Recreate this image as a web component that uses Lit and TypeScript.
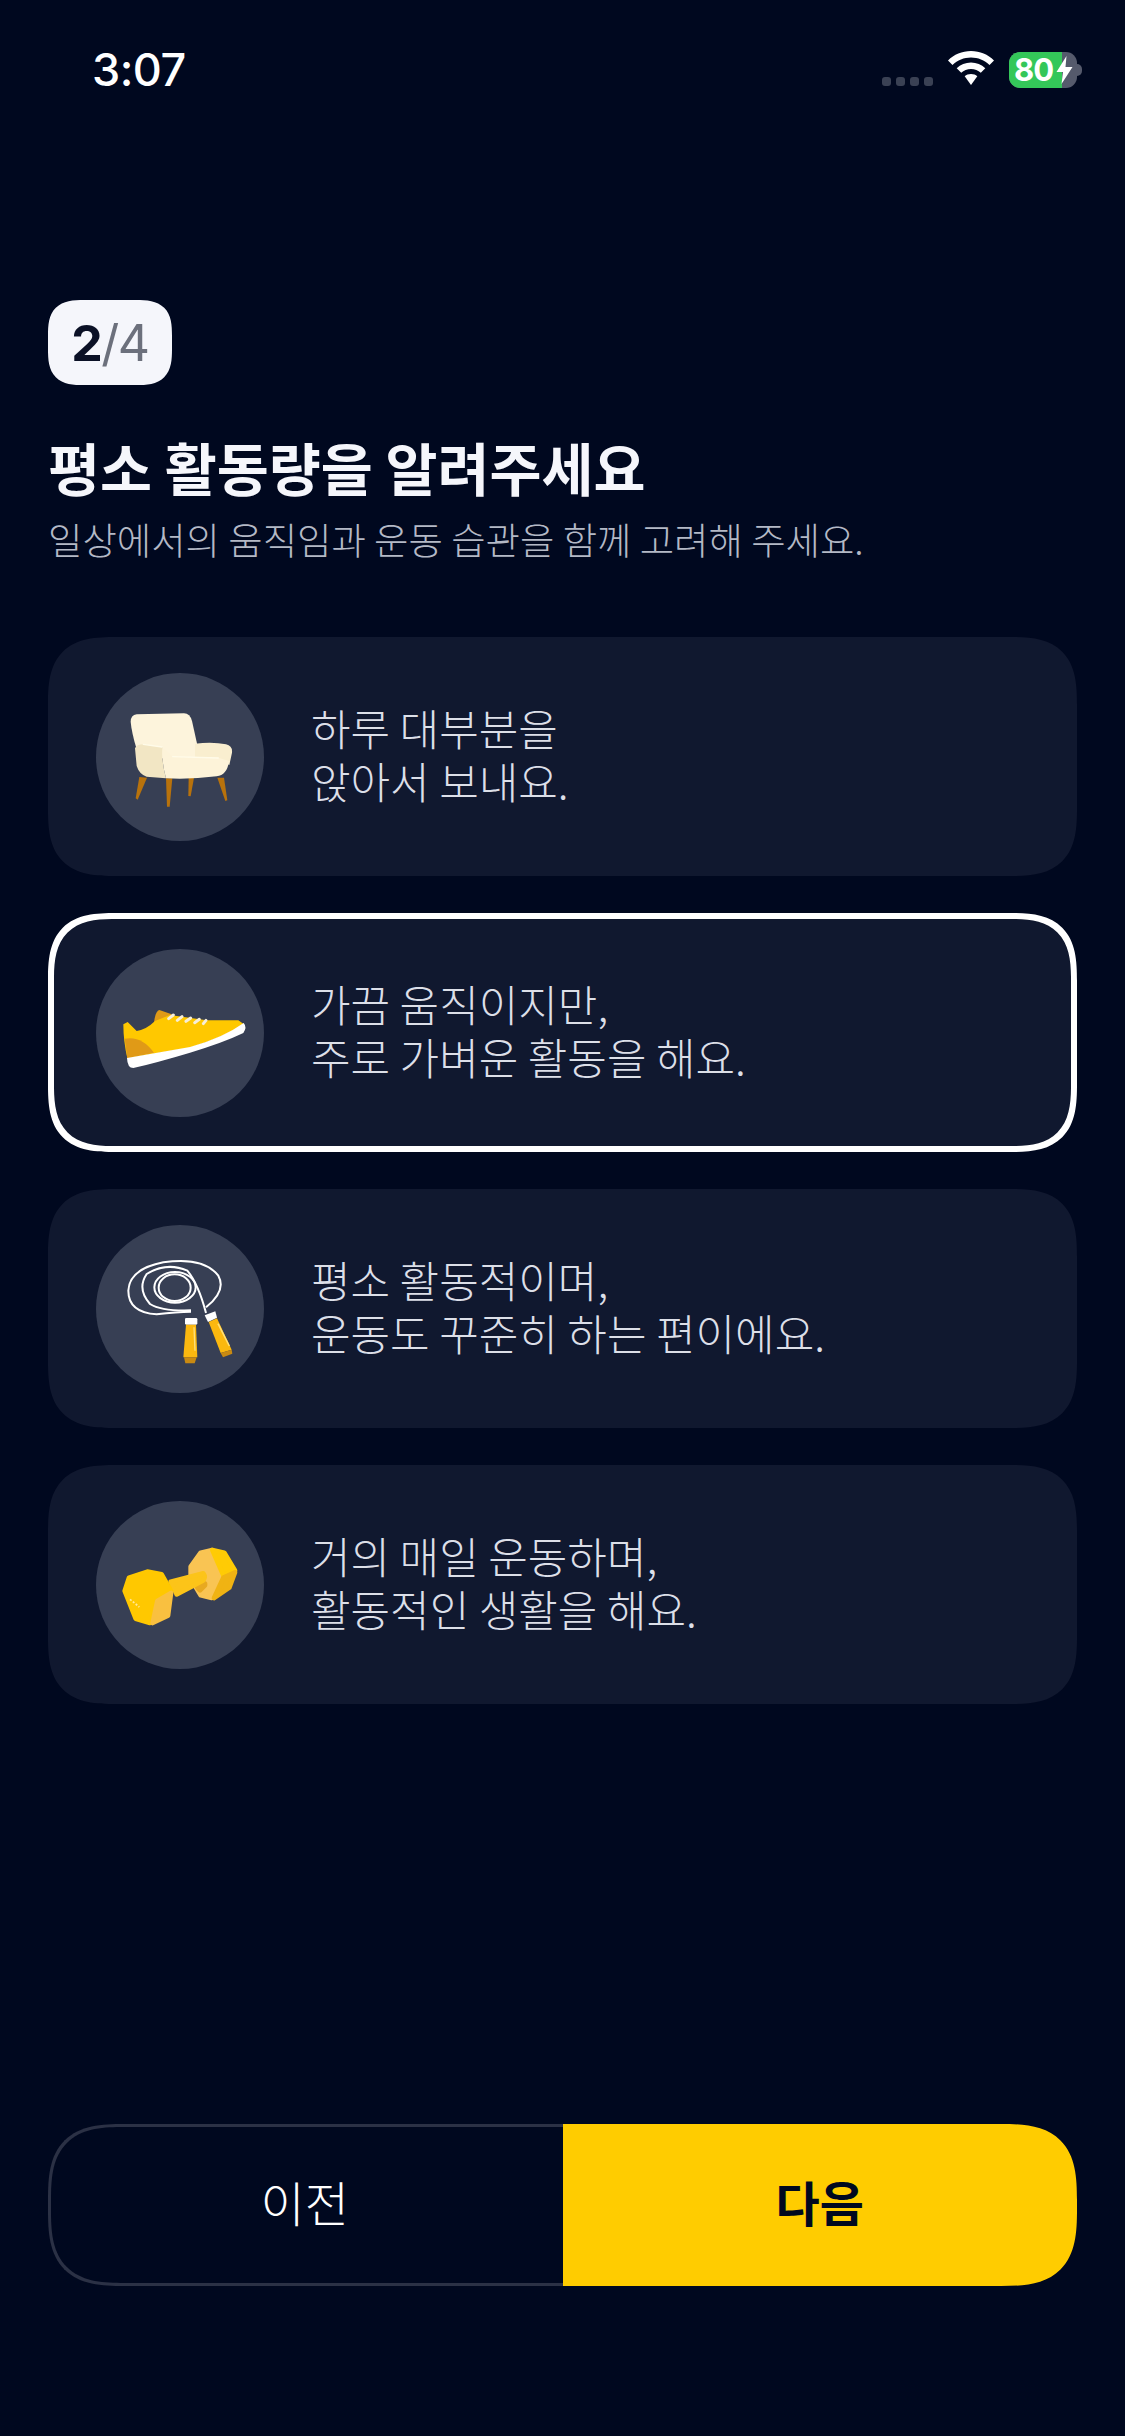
import { LitElement, html, css, svg } from 'lit';
import { customElement, state } from 'lit/decorators.js';

// Icons are drawn in the coordinates of a 190px crop at 3x, viewBox picks out the circle
const chairIcon = svg`
  <g fill="#b8720c">
    <path d="M148 348 L171 350 L143 416 L137 412z" />
    <path d="M228 352 L247 352 L239 437 L231 437z" />
    <path d="M296 350 L312 350 L302 406 L295 405z" />
    <path d="M382 350 L402 350 L412 418 L406 420z" />
  </g>
  <path fill="#fdf4dc" d="M122 182 Q122 163 140 160 L282 157 Q300 158 306 180 L322 252 L322 295 L225 295 L140 265 Q125 215 122 182z" />
  <path fill="#f9eecf" d="M315 248 Q370 242 408 250 Q428 254 426 275 L418 312 L385 295 L315 288z" />
  <path fill="#f2e6c4" d="M135 262 Q140 250 160 250 L218 258 Q214 300 228 352 L170 347 Q148 340 140 315z" />
  <path fill="#fdf3d9" d="M218 262 Q238 275 245 285 L385 290 L417 300 Q412 342 380 346 Q300 356 228 352 Q214 300 218 262z" />
  <g fill="none" stroke="#fffbe9" stroke-width="4" stroke-linecap="round">
    <path d="M160 250 L216 258" /><path d="M248 287 L385 291" />
  </g>
`;

const shoeIcon = svg`
  <path fill="#e09a17" d="M192 245 Q196 210 208 207 L245 220 L232 240z" />
  <path fill="#ffc800" d="M100 250 L113 243 L140 270 Q170 265 195 240 L240 222 L350 238 L445 238 L462 250 Q400 290 300 320 L112 352 Q100 300 100 250z" />
  <path fill="#e09a17" d="M104 293 Q155 283 192 335 L112 352z" />
  <path fill="#fff" d="M111 351 L300 318 Q400 290 461 246 Q472 258 460 276 Q400 305 300 335 Q200 365 130 381 Q112 381 111 351z" />
  <g stroke="#f6eeda" stroke-width="9" stroke-linecap="round">
    <path d="M236 233 L250 222" /><path d="M262 238 L276 227" /><path d="M288 241 L302 231" />
    <path d="M314 245 L328 235" /><path d="M340 248 L348 238" />
  </g>
`;

const ropeIcon = svg`
  <g fill="none" stroke="#fff" stroke-width="6">
    <path d="M303 288 Q260 288 200 296 Q115 290 115 225 Q118 160 220 140 Q340 122 385 180 Q410 225 348 275" />
    <path d="M348 292 Q325 205 292 165 Q230 138 170 175 Q140 220 180 265 Q215 287 303 284" />
    <ellipse cx="255" cy="215" rx="62" ry="46" />
    <ellipse cx="254" cy="216" rx="48" ry="40" />
  </g>
  <rect x="285" y="307" width="37" height="20" rx="4" fill="#fff" />
  <path fill="#fbb80f" d="M288 327 L318 327 L322 425 L280 425z" />
  <path fill="#ffe07a" d="M310 335 L314 335 L317 405 L313 405z" />
  <path fill="#c98a12" d="M282 425 L320 425 L314 443 L286 443z" />
  <path fill="#fff" d="M344 299 L376 287 L381 306 L354 319z" />
  <path fill="#fbb80f" d="M356 319 L381 308 L425 402 L392 412z" />
  <path fill="#ffe07a" d="M382 325 L386 323 L420 390 L416 392z" />
  <path fill="#c98a12" d="M392 412 L425 402 L427 414 L399 425z" />
`;

const dumbbellIcon = svg`
  <g stroke-width="14" stroke-linejoin="round">
    <path fill="#f9c453" stroke="#f9c453" d="M302 227 L332 185 L367 177 L398 250 L365 321 L332 313 L302 263z" />
    <path fill="#ffcb05" stroke="#ffcb05" d="M367 177 L403 185 L435 238 L400 253z" />
    <path fill="#f0b313" stroke="#f0b313" d="M400 260 L435 244 L418 290 L372 321z" />
    <path fill="#e8a920" stroke="#e8a920" d="M322 290 L345 278 L345 283 L330 298z" />
    <path fill="#fcc419" stroke="#fcc419" d="M242 272 L340 247 Q348 258 340 268 L260 310z" />
    <path fill="#ffc800" stroke="#ffc800" d="M104 300 L117 260 L172 242 L215 250 L243 300 L197 325 L180 396 L137 383z" />
    <path fill="#f9c040" stroke="#f9c040" d="M202 330 L243 306 L234 374 L188 396z" />
  </g>
  <path stroke="#ffe9a0" stroke-width="5" stroke-dasharray="6 5" d="M120 325 L148 348" />
`;

const OPTIONS = [
  { icon: chairIcon, box: '18 36 504 504', lines: ['하루 대부분을', '앉아서 보내요.'] },
  { icon: shoeIcon, box: '18 24 504 504', lines: ['가끔 움직이지만,', '주로 가벼운 활동을 해요.'] },
  { icon: ropeIcon, box: '18 28 504 504', lines: ['평소 활동적이며,', '운동도 꾸준히 하는 편이에요.'] },
  { icon: dumbbellIcon, box: '18 30 504 504', lines: ['거의 매일 운동하며,', '활동적인 생활을 해요.'] },
];

@customElement('app-root')
export class AppRoot extends LitElement {
  static styles = css`
    :host {
      display: block;
      font-family: 'Noto Sans CJK KR', 'Noto Sans', sans-serif;
    }
    .page {
      box-sizing: border-box;
      width: 1125px;
      height: 2436px;
      background: #00081f;
      color: #fff;
      display: flex;
      flex-direction: column;
      padding-bottom: 150px;
    }
    .status {
      height: 139px;
      flex: none;
      display: flex;
      align-items: center;
      padding: 0 48px 0 92px;
    }
    .time {
      font-family: Inter, sans-serif;
      font-weight: 500;
      font-size: 45px;
      letter-spacing: -0.5px;
      line-height: 1;
      flex: 1;
    }
    .dots {
      display: flex;
      gap: 5px;
      margin: 23px 15px 0 0;
    }
    .dots i {
      width: 9px;
      height: 9px;
      border-radius: 3px;
      background: #3a4154;
    }
    .wifi {
      width: 46px;
      height: 34px;
      margin: -3px 15px 0 0;
    }
    .battery {
      position: relative;
      width: 68px;
      height: 36px;
      border-radius: 11px;
      overflow: hidden;
      background: #555a6c;
      display: flex;
      align-items: center;
      font: 700 31px/36px Inter, sans-serif;
    }
    .battery .level {
      position: absolute;
      inset: 0 15px 0 0;
      background: #34c759;
    }
    .battery span {
      position: relative;
      margin-left: 5px;
      letter-spacing: -1px;
    }
    .battery svg {
      position: relative;
      width: 17px;
      height: 28px;
      margin-left: 3px;
    }
    .tip {
      width: 5px;
      height: 12px;
      margin-right: -5px;
      border-radius: 0 6px 6px 0;
      background: #555a6c;
    }
    main {
      flex: 1;
      display: flex;
      flex-direction: column;
      padding: 161px 48px 0;
    }
    .badge {
      align-self: flex-start;
      box-sizing: border-box;
      width: 124px;
      height: 85px;
      border-radius: 36px;
      corner-shape: superellipse(1.5);
      background: #f5f6fb;
      display: flex;
      align-items: center;
      justify-content: center;
      font: 400 50px/1 Inter, sans-serif;
      letter-spacing: -1.5px;
      color: #6c707c;
    }
    .badge b {
      font-weight: 700;
      color: #0b1126;
    }
    h1 {
      margin: 45px 0 0;
      font-size: 56.5px;
      line-height: 72px;
      font-weight: 700;
      color: #f5f6fb;
    }
    .sub {
      margin: 1px 0 62px;
      font-size: 37.4px;
      line-height: 72px;
      font-weight: 300;
      color: #b4b9c6;
    }
    .list {
      display: flex;
      flex-direction: column;
      gap: 37px;
    }
    .card {
      box-sizing: border-box;
      height: 239px;
      border: 6px solid transparent;
      border-radius: 68px;
      corner-shape: superellipse(1.5);
      background: #10182f;
      display: flex;
      align-items: center;
      gap: 47px;
      padding-left: 42px;
      cursor: pointer;
    }
    .card.on {
      border-color: #fff;
    }
    .circle {
      width: 168px;
      height: 168px;
      flex: none;
      border-radius: 50%;
      background: #373f54;
    }
    .circle svg {
      display: block;
      width: 168px;
      height: 168px;
    }
    .label {
      font-size: 43px;
      line-height: 53px;
      font-weight: 300;
      color: #dcdfe8;
      position: relative;
      top: -3px;
    }
    .actions {
      margin: auto 0 0;
      display: grid;
      grid-template-columns: 514.5px 1fr;
      height: 162px;
    }
    .actions button {
      font-family: inherit;
      font-size: 48px;
      padding: 0 0 8px;
      border: 0;
      background: none;
      color: #fff;
    }
    .prev {
      border: 3px solid #2b3145 !important;
      border-right: 0 !important;
      border-radius: 76px 0 0 76px;
      corner-shape: superellipse(1.5);
      font-weight: 300;
      padding-right: 4px !important;
    }
    .next {
      background: #ffcc00 !important;
      color: #00081f !important;
      border-radius: 0 76px 76px 0;
      corner-shape: superellipse(1.5);
      font-weight: 700;
    }
  `;

  @state() private selected = 1;

  render() {
    return html`
      <div class="page">
        <div class="status">
          <span class="time">3:07</span>
          <div class="dots"><i></i><i></i><i></i><i></i></div>
          <svg class="wifi" viewBox="0 0 46 34">
            <path fill="#fff" d="M23 0C14 0 6 3.500 0 9.500L4.500 14C9.500 9.200 16 6.500 23 6.500S36.500 9.200 41.500 14L46 9.500C40 3.500 32 0 23 0z" />
            <path fill="#fff" d="M23 11.500C17.500 11.500 12.500 13.700 8.700 17.300L13.200 21.800C15.800 19.400 19.200 18 23 18S30.200 19.400 32.800 21.800L37.300 17.300C33.500 13.700 28.500 11.500 23 11.500z" />
            <path fill="#fff" d="M23 23C20.500 23 18.300 23.900 16.700 25.300L23 34L29.300 25.300C27.700 23.900 25.500 23 23 23z" />
          </svg>
          <div class="battery">
            <div class="level"></div>
            <span>80</span>
            <svg viewBox="0 0 16 28"><path fill="#fff" d="M10 0L0 16H6.500L5 28L16 11H9z" /></svg>
          </div>
          <div class="tip"></div>
        </div>
        <main>
          <div class="badge"><b>2</b>/4</div>
          <h1>평소 활동량을 알려주세요</h1>
          <p class="sub">일상에서의 움직임과 운동 습관을 함께 고려해 주세요.</p>
          <div class="list">
            ${OPTIONS.map((opt, i) => html`
              <div class="card ${i === this.selected ? 'on' : ''}" @click=${() => (this.selected = i)}>
                <div class="circle">
                  <svg viewBox=${opt.box}>${opt.icon}</svg>
                </div>
                <div class="label">${opt.lines[0]}<br />${opt.lines[1]}</div>
              </div>
            `)}
          </div>
          <div class="actions">
            <button class="prev">이전</button>
            <button class="next">다음</button>
          </div>
        </main>
      </div>
    `;
  }
}
